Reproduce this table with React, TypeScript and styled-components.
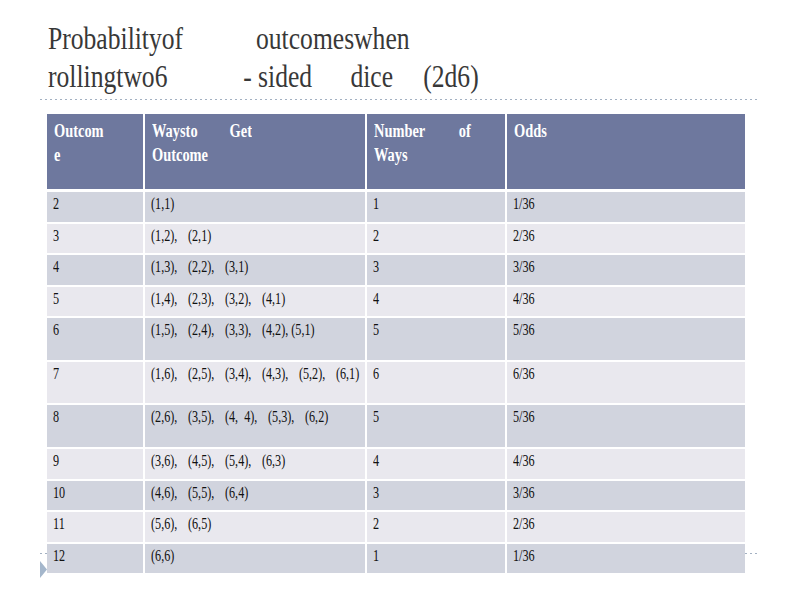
import styled, { createGlobalStyle } from 'styled-components';

const GlobalStyle = createGlobalStyle`
  html, body {
    margin: 0;
    padding: 0;
    background: #fff;
  }
  body {
    font-family: "Liberation Serif", "Times New Roman", serif;
  }
`;

type Tone = 'head' | 'dark' | 'light';

type Outcome = {
    total: string,
    ways: string[],
    count: string,
    odds: string,
    tall?: boolean,
}

const outcomes: Outcome[] = [
    { total: '2', ways: ['(1,1)'], count: '1', odds: '1/36' },
    { total: '3', ways: ['(1,2),', '(2,1)'], count: '2', odds: '2/36' },
    { total: '4', ways: ['(1,3),', '(2,2),', '(3,1)'], count: '3', odds: '3/36' },
    { total: '5', ways: ['(1,4),', '(2,3),', '(3,2),', '(4,1)'], count: '4', odds: '4/36' },
    { total: '6', ways: ['(1,5),', '(2,4),', '(3,3),', '(4,2), (5,1)'], count: '5', odds: '5/36', tall: true },
    { total: '7', ways: ['(1,6),', '(2,5),', '(3,4),', '(4,3),', '(5,2),', '(6,1)'], count: '6', odds: '6/36', tall: true },
    { total: '8', ways: ['(2,6),', '(3,5),', '(4,  4),', '(5,3),', '(6,2)'], count: '5', odds: '5/36', tall: true },
    { total: '9', ways: ['(3,6),', '(4,5),', '(5,4),', '(6,3)'], count: '4', odds: '4/36' },
    { total: '10', ways: ['(4,6),', '(5,5),', '(6,4)'], count: '3', odds: '3/36' },
    { total: '11', ways: ['(5,6),', '(6,5)'], count: '2', odds: '2/36' },
    { total: '12', ways: ['(6,6)'], count: '1', odds: '1/36' },
];

export default function App() {
    return (
        <Slide>
            <GlobalStyle />
            <Title>
                <TitleLine>
                    <Word $w={260}>Probabilityof</Word>
                    <Word>outcomeswhen</Word>
                </TitleLine>
                <TitleLine>
                    <Word $w={244}>rollingtwo6</Word>
                    <Word $w={134}>- sided</Word>
                    <Word $w={91}>dice</Word>
                    <Word>(2d6)</Word>
                </TitleLine>
            </Title>
            <Rule />

            <Table>
                <HeadRow>
                    <HeadCell>
                        <HeadText>Outcom<br />e</HeadText>
                    </HeadCell>
                    <HeadCell>
                        <HeadText>
                            <Spread $w={125}>Waysto Get</Spread>
                            Outcome
                        </HeadText>
                    </HeadCell>
                    <HeadCell>
                        <HeadText>
                            <Spread $w={121}>Number of</Spread>
                            Ways
                        </HeadText>
                    </HeadCell>
                    <HeadCell>
                        <HeadText>Odds</HeadText>
                    </HeadCell>
                </HeadRow>
                {outcomes.map((o, i) => {
                    const tone: Tone = i % 2 === 0 ? 'dark' : 'light';
                    return (
                        <BodyRow key={o.total} $tall={o.tall}>
                            <Cell $tone={tone}><CellText>{o.total}</CellText></Cell>
                            <Cell $tone={tone}>
                                <CellText>
                                    {o.ways.map((w) => <span key={w}>{w}</span>)}
                                </CellText>
                            </Cell>
                            <Cell $tone={tone}><CellText>{o.count}</CellText></Cell>
                            <Cell $tone={tone}><CellText>{o.odds}</CellText></Cell>
                        </BodyRow>
                    );
                })}
            </Table>

            <FooterRule />
            <Bullet viewBox="0 0 7 17" aria-hidden>
                <polygon points="0,0 7,8.5 0,17" fill="#a4b6cb" />
            </Bullet>
        </Slide>
    );
}

const tones: Record<Tone, string> = {
    head: '#6e789e',
    dark: '#d1d4de',
    light: '#e9e8ee',
};

const Slide = styled.div`
    position: relative;
    width: 800px;
    height: 600px;
    overflow: hidden;
`;

const Title = styled.h1`
    margin: 20px 0 0 48px;
    font: 400 32px/37.5px "Liberation Serif", "Times New Roman", serif;
    color: #383838;
    width: max-content;
    transform: scaleX(0.8);
    transform-origin: 0 0;
`;

const TitleLine = styled.div`
    display: flex;
    white-space: pre;
`;

const Word = styled.span<{ $w?: number }>`
    flex: none;
    ${(p) => (p.$w ? `width: ${p.$w}px;` : '')}
`;

const Rule = styled.div`
    margin: 4px 0 0 40px;
    width: 717px;
    height: 1px;
    background: repeating-linear-gradient(to right, #a3b1c2 0 2px, transparent 2px 5px);
`;

const Table = styled.div`
    position: relative;
    z-index: 1;
    display: flex;
    flex-direction: column;
    gap: 2px;
    width: 698px;
    margin: 14px 0 0 47px;
    background: #fff;
`;

const Columns = styled.div`
    display: grid;
    grid-template-columns: 96px 220px 138px 238px;
    column-gap: 2px;
`;

const HeadRow = styled(Columns)`
    height: 75px;
    margin-bottom: 1px;
`;

const BodyRow = styled(Columns)<{ $tall?: boolean }>`
    height: ${(p) => (p.$tall ? '41.7px' : '29.5px')};
`;

const HeadCell = styled.div`
    background: ${tones.head};
    padding: 5px 0 0 7px;
`;

const Cell = styled.div<{ $tone: Tone }>`
    background: ${(p) => tones[p.$tone]};
    padding: 3px 0 0 6px;
`;

const HeadText = styled.div`
    width: max-content;
    font: 700 18px/24px "Liberation Serif", "Times New Roman", serif;
    color: #fff;
    white-space: nowrap;
    transform: scaleX(0.8);
    transform-origin: 0 0;
`;

const Spread = styled.div<{ $w: number }>`
    width: ${(p) => p.$w}px;
    white-space: normal;
    text-align: justify;
    text-align-last: justify;
`;

const CellText = styled.div`
    display: flex;
    gap: 14px;
    width: max-content;
    font: 400 16px/18px "Liberation Serif", "Times New Roman", serif;
    color: #111;
    white-space: pre;
    transform: scaleX(0.76);
    transform-origin: 0 0;
`;

const FooterRule = styled.div`
    position: absolute;
    left: 40px;
    top: 553px;
    width: 717px;
    height: 1px;
    background: repeating-linear-gradient(to right, #a3b1c2 0 2px, transparent 2px 5px);
`;

const Bullet = styled.svg`
    position: absolute;
    left: 40px;
    top: 561px;
    width: 7px;
    height: 17px;
`;
